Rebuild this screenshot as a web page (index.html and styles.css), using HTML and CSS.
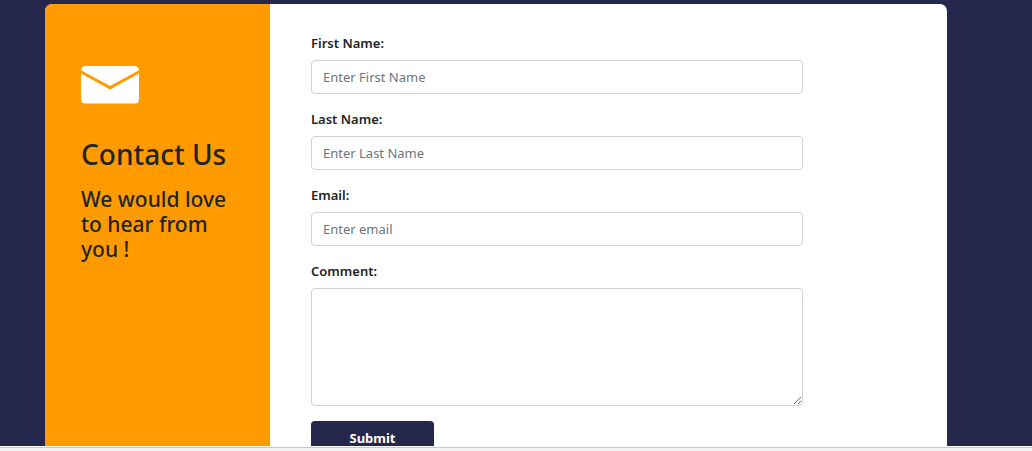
FILE: index.html
```html
<!DOCTYPE html>
<html lang="en">
<head>
<meta charset="utf-8">
<title>Contact Us</title>
<link rel="stylesheet" href="styles.css">
</head>
<body>
<main class="page">
  <div class="card">
    <section class="intro">
      <svg class="envelope" viewBox="0 0 58 38" aria-hidden="true">
        <path d="M0 4.200Q.8 0 5 0H53Q57.200 0 58 4.200L29 20Z"/>
        <path d="M0 7.400L29 23.500L58 7.400V33Q58 37.500 53.500 37.500H4.500Q0 37.500 0 33Z"/>
      </svg>
      <h2 class="title">Contact Us</h2>
      <h4 class="subtitle">We would love to hear from you !</h4>
    </section>
    <form class="contact-form">
      <div class="field">
        <label class="label" for="fname">First Name:</label>
        <input class="control" type="text" id="fname" placeholder="Enter First Name">
      </div>
      <div class="field">
        <label class="label" for="lname">Last Name:</label>
        <input class="control" type="text" id="lname" placeholder="Enter Last Name">
      </div>
      <div class="field">
        <label class="label" for="email">Email:</label>
        <input class="control" type="email" id="email" placeholder="Enter email">
      </div>
      <div class="field">
        <label class="label" for="comment">Comment:</label>
        <textarea class="control comment" id="comment"></textarea>
      </div>
      <button class="submit" type="submit">Submit</button>
    </form>
  </div>
</main>
<footer class="bottom-bar"></footer>
</body>
</html>
```
FILE: styles.css
```css
* {
  box-sizing: border-box;
}

body {
  margin: 0;
  height: 100vh;
  display: flex;
  flex-direction: column;
  overflow: hidden;
  background: #25274d;
  color: #212529;
  font-family: "Noto Sans", "Open Sans", sans-serif;
  font-size: 13px;
}

.page {
  flex: 1;
  min-height: 0;
  overflow: hidden;
  padding: 4px 85px 0 45px;
}

.card {
  display: grid;
  grid-template-columns: 225px 1fr;
  background: #fff;
  border-radius: 7px;
  overflow: hidden;
}

.intro {
  background: #ff9b00;
  padding: 62px 36px;
}

.envelope {
  display: block;
  width: 58px;
  height: 38px;
  fill: #fff;
}

.title,
.subtitle {
  margin: 0;
  font-weight: 500;
}

.title {
  margin-top: 33px;
  font-size: 28px;
  line-height: 34px;
}

.subtitle {
  margin-top: 16px;
  font-size: 21px;
  line-height: 25px;
}

.contact-form {
  padding: 29px 144px 40px 41px;
}

.field {
  display: flex;
  flex-direction: column;
  gap: 7px;
  margin-bottom: 15px;
}

.label {
  font-weight: 600;
  line-height: 20px;
}

.control {
  width: 100%;
  height: 34px;
  padding: 5px 11px;
  border: 1px solid #ced4da;
  border-radius: 4px;
  background: #fff;
  color: #495057;
  font: inherit;
}

.control::placeholder {
  color: #6c757d;
  opacity: 1;
}

.comment {
  height: 118px;
  resize: vertical;
}

.submit {
  display: block;
  width: 123px;
  height: 34px;
  border: 0;
  border-radius: 4px;
  background: #25274d;
  color: #fff;
  font: inherit;
  font-weight: 700;
}

.bottom-bar {
  height: 5px;
  background: #f4f4f4;
  border-top: 1px solid #fff;
  box-shadow: inset 0 1px #c8c8c8;
}
```
